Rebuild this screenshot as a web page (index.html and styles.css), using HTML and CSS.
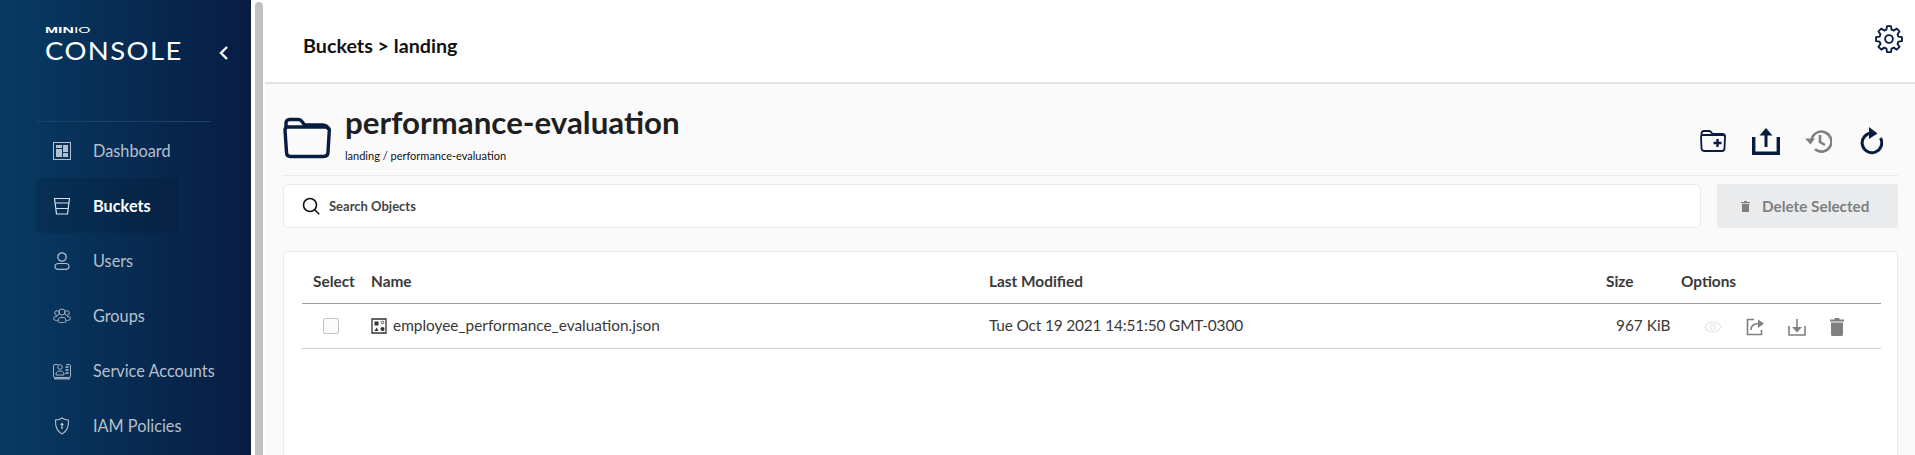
FILE: index.html
```html
<!DOCTYPE html>
<html>
<head>
  <meta charset="UTF-8">
  <title>MinIO Console</title>
  <link rel="stylesheet" href="styles.css">
</head>
<body>
  <aside class="sidebar">
    <div class="brand">
      <div class="logo">
        <div class="logo-top"><b>MIN</b><span>IO</span></div>
        <div class="logo-name">CONSOLE</div>
      </div>
      <svg class="collapse" width="12" height="16" viewBox="0 0 12 16"><path d="M9 2 3 8l6 6" fill="none" stroke="#fff" stroke-width="2.4"/></svg>
    </div>
    <div class="side-line"></div>
    <nav class="menu">
      <a class="menu-item">
        <svg width="18" height="18" viewBox="0 0 18 18"><rect x=".5" y=".5" width="17" height="17" fill="none" stroke="currentColor" stroke-width="1"/><path fill="currentColor" d="M3 3h6v3H3zM3 7h6v8H3zM10 3h5v7h-5zM10 11h5v4h-5z"/></svg>
        <span>Dashboard</span>
      </a>
      <a class="menu-item active">
        <svg width="18" height="18" viewBox="0 0 18 18" fill="none" stroke="currentColor" stroke-width="1.2"><path d="M1 1.500h16M1.500 1.500l2 15.500h11l2-15.500M2.400 6h13.200M3 11.500h12"/></svg>
        <span>Buckets</span>
      </a>
      <a class="menu-item">
        <svg width="18" height="18" viewBox="0 0 18 18" fill="none" stroke="currentColor" stroke-width="1.2"><circle cx="9" cy="5" r="4.200"/><path d="M5.500 11.500h7c2 0 3.500 1.200 3.500 3s-1.500 2.800-3.500 2.800h-7C3.500 17.300 2 16.300 2 14.500s1.500-3 3.500-3z"/></svg>
        <span>Users</span>
      </a>
      <a class="menu-item">
        <svg width="18" height="18" viewBox="0 0 18 18" fill="none" stroke="currentColor" stroke-width=".9"><circle cx="9" cy="5" r="3"/><circle cx="4" cy="6" r="2.300"/><circle cx="14" cy="6" r="2.300"/><path d="M5.500 11.500c.5-1.500 6.500-1.500 7 0l.5 3c0 1.500-8 1.500-8 0zM4 9.500c-3 0-4 1.500-3.500 2.500s2.500 1.500 4 1.500M14 9.500c3 0 4 1.500 3.500 2.500s-2.500 1.500-4 1.500"/></svg>
        <span>Groups</span>
      </a>
      <a class="menu-item">
        <svg width="18" height="18" viewBox="0 0 18 18" fill="none" stroke="currentColor" stroke-width=".9"><path d="M5 2.500H2a1.500 1.500 0 0 0-1.500 1.500v10A1.500 1.500 0 0 0 2 15.500h14a1.500 1.500 0 0 0 1.500-1.500V4A1.500 1.500 0 0 0 16 2.500h-3"/><circle cx="7" cy="5" r="2.300"/><path d="M3 12c0-4 8-4 8 0v1H3z"/><path stroke-width="1.300" d="M12.500 5h3M12.500 8h3M12.500 11h3"/><path stroke-width="1.200" d="M1 16.800h16"/></svg>
        <span>Service Accounts</span>
      </a>
      <a class="menu-item">
        <svg width="18" height="18" viewBox="0 0 18 18" fill="none" stroke="currentColor" stroke-width="1.100"><path d="M9 1c2 1.500 4 2 6.500 2 .3 6.500-1.500 11.500-6.500 14C4 14.500 2.200 9.500 2.500 3 5 3 7 2.500 9 1z"/><path fill="currentColor" stroke="none" d="M9 5.500l2 2.500H9.700v4H8.300V8H7z"/></svg>
        <span>IAM Policies</span>
      </a>
    </nav>
  </aside>

  <div class="scroll-track"><div class="scroll-thumb"></div></div>

  <main class="main">
    <header class="topbar">
      <h1 class="crumbs">Buckets &gt; landing</h1>
      <svg class="gear" width="28" height="28" viewBox="0 0 24 24" fill="none" stroke="#081c42" stroke-width="1.600" stroke-linejoin="round"><circle cx="12" cy="12" r="3.300"/><path d="M10.300 1h3.400l.5 3 1.900.8 2.500-1.700 2.400 2.400-1.700 2.500.8 1.900 3 .5v3.400l-3 .5-.8 1.900 1.700 2.500-2.400 2.400-2.500-1.700-1.900.8-.5 3h-3.400l-.5-3-1.900-.8-2.500 1.700-2.400-2.400 1.700-2.500-.8-1.900-3-.5v-3.400l3-.5.8-1.900-1.700-2.500 2.400-2.400 2.500 1.700 1.900-.8z"/></svg>
    </header>

    <section class="content">
      <div class="bucket-head">
        <svg class="big-folder" width="48" height="42" viewBox="0 0 48 42" fill="none" stroke="#081c42" stroke-width="3.400" stroke-linejoin="round"><path d="M3 10V6c0-2 1.500-3.500 3.500-3.500h9c1.500 0 2.500.5 3.500 2l2.500 3.500h18c3.500 0 6 2 6 5"/><path d="M2 13c0-2 1.500-3 3.500-3h37c2.500 0 4 1.500 3.800 3.500L45 35c0 3-2 4.500-4.500 4.500h-33C5 39.500 3.500 38 3.500 35z"/></svg>
        <div class="bucket-title">
          <h2>performance-evaluation</h2>
          <p>landing / performance-evaluation</p>
        </div>
        <div class="head-actions">
          <svg width="26" height="22" viewBox="0 0 26 22" fill="none" stroke="#081c42" stroke-width="1.800" stroke-linejoin="round"><path d="M1.500 5V3.500C1.500 2 2.500 1 4 1h5c1 0 1.500.5 2 1l1.500 2H22c2 0 3 1 3 2.500"/><path d="M1 6.500C1 5.500 2 5 3 5h20c1.500 0 2.200 1 2 2l-.5 11c0 1.800-1 3-2.500 3H4c-1.500 0-2.500-1-2.500-3z"/><path stroke-width="2.400" d="M17.500 9v8M13.500 13h8"/></svg>
          <svg width="28" height="27" viewBox="0 0 28 27" fill="none" stroke="#081c42"><path stroke-width="3" d="M14 19V3"/><path fill="#081c42" stroke="none" d="M14 0l6.500 7.500h-13z"/><path stroke-width="3.400" d="M1.700 9v16.300h24.600V9"/></svg>
          <svg class="history" width="27" height="24" viewBox="0 0 27 24" fill="none" stroke="#808080" stroke-width="2.600"><path d="M6.500 11a10 10 0 1 1 3.500 9.300"/><path fill="#808080" stroke="none" d="M0 9.500h10L5.500 15.500z"/><path d="M15 6v7l5 3"/></svg>
          <svg width="24" height="28" viewBox="0 0 24 28" fill="none" stroke="#081c42" stroke-width="3"><path d="M13 6a9.800 9.800 0 1 0 8.500 5"/><path fill="#081c42" stroke="none" d="M10 0l8.500 6.500L10 12z"/></svg>
        </div>
      </div>

      <div class="tools">
        <label class="search">
          <svg width="18" height="18" viewBox="0 0 18 18" fill="none" stroke="#111" stroke-width="1.600"><circle cx="8" cy="8" r="6.500"/><path d="M12.700 12.700l4.500 4.500"/></svg>
          <span>Search Objects</span>
        </label>
        <button class="delete-btn">
          <svg width="9" height="11" viewBox="0 0 9 11" fill="#808080"><path d="M1 3h7v8H1zM0 1h3V0h3v1h3v1.300H0z"/></svg>
          Delete Selected
        </button>
      </div>

      <div class="panel">
        <div class="row head-row">
          <div class="col-select">Select</div>
          <div class="col-name">Name</div>
          <div class="col-date">Last Modified</div>
          <div class="col-size">Size</div>
          <div class="col-opts">Options</div>
        </div>
        <div class="row file-row">
          <div class="col-select"><span class="check"></span></div>
          <div class="col-name">
            <svg class="file-icon" width="16" height="16" viewBox="0 0 16 16"><path fill="none" stroke="#333" stroke-width="1.300" d="M1 1h14v14H1z"/><path fill="#333" d="M3.500 3.500h4v4h-4zM3.500 13l2-3.500 2 3.500zM11.500 9a2 2 0 1 0 .01 0z"/><circle cx="11.500" cy="4.500" r="1.300" fill="none" stroke="#333" stroke-width=".8"/></svg>
            employee_performance_evaluation.json
          </div>
          <div class="col-date file-date">Tue Oct 19 2021 14:51:50 GMT-0300</div>
          <div class="col-size size-val">967 KiB</div>
          <div class="col-opts opts">
            <svg width="18" height="12" viewBox="0 0 18 12" fill="none" stroke="#e6e6e6" stroke-width="1.200"><path d="M.8 6C3 2.500 5.800 1 9 1s6 1.500 8.200 5C15 9.500 12.200 11 9 11S3 9.500.8 6z"/><circle cx="9" cy="6" r="2.500"/></svg>
            <svg width="18" height="18" viewBox="0 0 18 18" fill="none" stroke="#808080" stroke-width="1.600"><path d="M8 1.500H1.500v15h14V12"/><path d="M5 12c0-4 3-6.500 8-6.500"/><path fill="#808080" stroke="none" d="M12 1.500l6 4-6 4.500z"/></svg>
            <svg width="18" height="18" viewBox="0 0 18 18" fill="none" stroke="#808080" stroke-width="1.600"><path d="M1 8v9h16V8"/><path d="M9 1v11"/><path fill="#808080" stroke="none" d="M9 14.500 4 9h10z"/></svg>
            <svg width="14" height="18" viewBox="0 0 14 18" fill="#808080"><path d="M1 4.500h12V16.500a1.500 1.500 0 0 1-1.500 1.500h-9A1.500 1.500 0 0 1 1 16.500zM0 1.500h4.500V0h5v1.500H14v2H0z"/></svg>
          </div>
        </div>
      </div>
    </section>
  </main>
</body>
</html>
```

FILE: styles.css
```css
html, body {
  height: 100%;
  margin: 0;
  overflow: hidden;
}

body {
  display: flex;
  background-color: #fff;
  font-family: Lato, "Open Sans", sans-serif;
  color: #393939;
}

h1, h2, p {
  margin: 0;
}

/* sidebar */
.sidebar {
  width: 251px;
  flex: none;
  padding: 0 0 0 36px;
  box-sizing: border-box;
  background: linear-gradient(90deg, #073b63 0%, #081c42 100%);
}

.brand {
  display: flex;
  align-items: flex-start;
  height: 121px;
  padding-left: 9px;
}

.logo {
  color: #fff;
  width: 173px;
  padding-top: 25px;
}

.logo-top {
  font-family: "Liberation Sans", sans-serif;
  font-size: 9px;
  line-height: 11px;
  transform: scaleX(1.750);
  transform-origin: left;
}

.logo-top b {
  font-weight: 700;
}

.logo-name {
  font-size: 24.500px;
  line-height: 29px;
  font-weight: 400;
  letter-spacing: 1.300px;
  transform: scaleX(1.120);
  transform-origin: left;
}

.collapse {
  margin-top: 45px;
}

.side-line {
  width: 175px;
  height: 1px;
  background-color: #1e3f68;
}

.menu {
  padding-top: 1px;
}

.menu-item {
  display: flex;
  align-items: center;
  gap: 22px;
  width: 142px;
  height: 55px;
  padding-left: 17px;
  box-sizing: border-box;
  white-space: nowrap;
  font-size: 16.300px;
  color: #b4c0cf;
}

.menu-item svg {
  flex: none;
}

.menu-item.active {
  background-color: rgba(0, 0, 0, .1);
  color: #fff;
  font-weight: 700;
}

.menu-item.active svg {
  color: #d8dfe8;
}

/* browser scrollbar of the inner pane */
.scroll-track {
  width: 14px;
  flex: none;
  padding: 2px 2px 0 4px;
  box-sizing: border-box;
}

.scroll-thumb {
  height: 100%;
  background-color: #c2c2c2;
  border-radius: 4px 4px 0 0;
}

/* main */
.main {
  flex: 1;
  min-width: 0;
  display: flex;
  flex-direction: column;
}

.topbar {
  flex: none;
  display: flex;
  align-items: center;
  justify-content: space-between;
  padding: 8px 12px 0 38px;
  height: 74px;
  border-bottom: 2px solid #e2e2e2;
  background-color: #fff;
}

.crumbs {
  font-size: 19.700px;
  font-weight: 700;
  color: #111;
}

.gear {
  margin-top: -12px;
}

.content {
  flex: 1;
  background-color: #fafafa;
  padding: 0 17px 0 18px;
}

.bucket-head {
  display: flex;
  align-items: flex-start;
  height: 91px;
  border-bottom: 1px solid #eaeaea;
}

.big-folder {
  margin-top: 33px;
  flex: none;
}

.bucket-title {
  margin-left: 14px;
  padding-top: 20px;
  flex: 1;
}

.bucket-title h2 {
  font-size: 31.300px;
  line-height: 36px;
  font-weight: 700;
  color: #1f1f1f;
}

.bucket-title p {
  font-size: 11px;
  line-height: 14px;
  margin-top: 9px;
  color: #111;
}

.head-actions {
  display: flex;
  align-items: center;
  gap: 26px;
  height: 28px;
  margin-top: 43px;
  padding-right: 15px;
}

.history {
  margin-left: -1px;
  margin-right: 1px;
}

.tools {
  display: flex;
  gap: 16px;
  margin-top: 8px;
}

.search {
  flex: 1;
  height: 44px;
  display: flex;
  align-items: center;
  gap: 9px;
  padding-left: 18px;
  background-color: #fff;
  border: 1px solid #eaeaea;
  border-radius: 5px;
  box-sizing: border-box;
  font-size: 13px;
  font-weight: 700;
  color: #444;
}

.delete-btn {
  width: 181px;
  height: 44px;
  padding: 0 0 0 24px;
  border: none;
  border-radius: 3px;
  background-color: #e9ebed;
  color: #808080;
  font-family: inherit;
  font-size: 15.300px;
  font-weight: 700;
  display: flex;
  align-items: center;
  gap: 12px;
}

.panel {
  margin-top: 23px;
  height: 220px;
  padding: 0 16px 0 18px;
  background-color: #fff;
  border: 1px solid #eaeaea;
  border-radius: 3px;
}

.row {
  display: grid;
  grid-template-columns: 69px 618px 617px 75px 1fr;
  align-items: center;
  font-size: 15.400px;
}

.head-row {
  height: 45px;
  padding-top: 6px;
  border-bottom: 1px solid #9c9c9c;
  font-weight: 700;
  color: #3a3a3a;
}

.col-select {
  padding-left: 11px;
}

.file-row {
  height: 45px;
  padding-bottom: 2px;
  box-sizing: border-box;
  border-bottom: 1px solid #d0d0d0;
}

.check {
  display: block;
  width: 14px;
  height: 14px;
  margin: 1px 0 0 10px;
  background-color: #fbfbfb;
  border: 1px solid #c4c4c4;
  border-radius: 2px;
}

.file-row .col-name {
  display: flex;
  align-items: center;
  gap: 6px;
}

.file-icon {
  margin-top: 2px;
}

.file-date {
  letter-spacing: -.15px;
}

.size-val {
  padding-left: 10px;
  white-space: nowrap;
}

.opts {
  display: flex;
  align-items: center;
  gap: 24px;
  padding: 3px 0 0 23px;
}
```
